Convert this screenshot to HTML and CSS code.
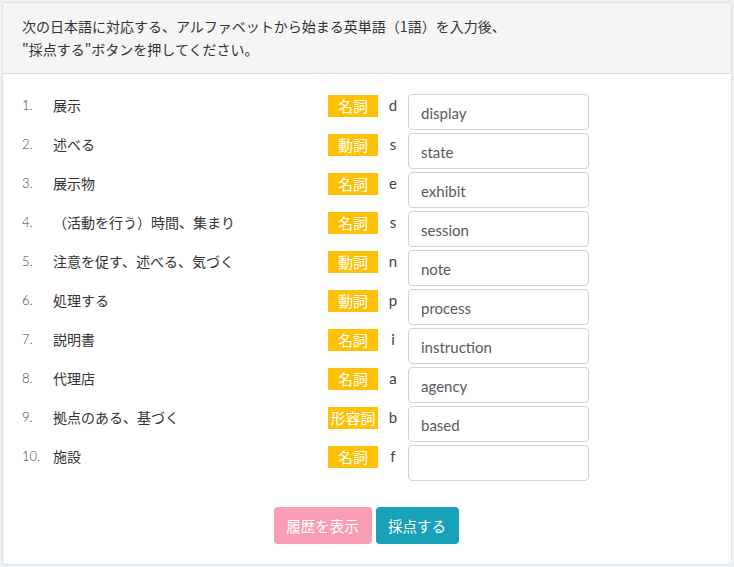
FILE: index.html
```html
<!DOCTYPE html>
<html lang="ja">
<head>
<meta charset="utf-8">
<link rel="stylesheet" href="styles.css">
</head>
<body>
<div class="card">
  <div class="card-header">次の日本語に対応する、アルファベットから始まる英単語（1語）を入力後、<br>"採点する"ボタンを押してください。</div>
  <div class="card-body">
    <ol class="quiz">
      <li class="row"><span class="num">1.</span><span class="jp">展示</span><span class="badge">名詞</span><span class="letter">d</span><input class="answer" value="display"></li>
      <li class="row"><span class="num">2.</span><span class="jp">述べる</span><span class="badge">動詞</span><span class="letter">s</span><input class="answer" value="state"></li>
      <li class="row"><span class="num">3.</span><span class="jp">展示物</span><span class="badge">名詞</span><span class="letter">e</span><input class="answer" value="exhibit"></li>
      <li class="row"><span class="num">4.</span><span class="jp">（活動を行う）時間、集まり</span><span class="badge">名詞</span><span class="letter">s</span><input class="answer" value="session"></li>
      <li class="row"><span class="num">5.</span><span class="jp">注意を促す、述べる、気づく</span><span class="badge">動詞</span><span class="letter">n</span><input class="answer" value="note"></li>
      <li class="row"><span class="num">6.</span><span class="jp">処理する</span><span class="badge">動詞</span><span class="letter">p</span><input class="answer" value="process"></li>
      <li class="row"><span class="num">7.</span><span class="jp">説明書</span><span class="badge">名詞</span><span class="letter">i</span><input class="answer" value="instruction"></li>
      <li class="row"><span class="num">8.</span><span class="jp">代理店</span><span class="badge">名詞</span><span class="letter">a</span><input class="answer" value="agency"></li>
      <li class="row"><span class="num">9.</span><span class="jp">拠点のある、基づく</span><span class="badge">形容詞</span><span class="letter">b</span><input class="answer" value="based"></li>
      <li class="row"><span class="num">10.</span><span class="jp">施設</span><span class="badge">名詞</span><span class="letter">f</span><input class="answer" value=""></li>
    </ol>
    <div class="actions">
      <button class="btn btn-pink">履歴を表示</button>
      <button class="btn btn-teal">採点する</button>
    </div>
  </div>
</div>
</body>
</html>
```
FILE: styles.css
```css
html, body {
  margin: 0;
  padding: 0;
}
body {
  background: #eef1f4;
  padding: 2px;
  font-family: Lato, "Noto Sans CJK JP", sans-serif;
  font-size: 14px;
  color: #333;
}
.card {
  width: 730px;
  box-sizing: border-box;
  background: #fff;
  border: 1px solid #dcdfe3;
  border-radius: 3px;
  height: 563px;
}
.card-header {
  background: #f5f5f5;
  border-bottom: 1px solid #dcdcdc;
  padding: 12px 19px 12px;
  line-height: 23px;
  font-family: "Noto Sans CJK JP", sans-serif;
  font-size: 14px;
  color: #333;
  height: 46px;
}
.card-body {
  padding: 20px 19px 20px;
}
.quiz {
  list-style: none;
  margin: 0;
  padding: 0;
  display: flex;
  flex-direction: column;
  gap: 3px;
}
.row {
  display: flex;
  align-items: flex-start;
  height: 36px;
}
.num {
  width: 31px;
  line-height: 22px;
  font-size: 13px;
  color: #444;
  font-family: Lato, sans-serif;
  font-weight: 300;
}
.jp {
  width: 275px;
  line-height: 22px;
  font-family: "Noto Sans CJK JP", sans-serif;
}
.badge {
  width: 50px;
  height: 22px;
  margin-top: 1px;
  background: #ffc107;
  color: #fff;
  text-align: center;
  line-height: 22px;
  font-family: "Noto Sans CJK JP", sans-serif;
  font-size: 15px;
}
.letter {
  width: 30px;
  text-align: center;
  line-height: 22px;
  font-size: 15px;
  color: #444;
}
.answer {
  width: 181px;
  height: 36px;
  box-sizing: border-box;
  border: 1px solid #ced4da;
  border-radius: 4px;
  padding: 2px 12px 0;
  font-family: Lato, sans-serif;
  font-size: 15px;
  color: #555a60;
  background: #fff;
  outline: none;
}
.actions {
  display: flex;
  justify-content: center;
  gap: 4px;
  margin-top: 26px;
  padding-right: 2px;
}
.btn {
  height: 37px;
  border: none;
  border-radius: 4px;
  padding: 0 12px;
  color: #fff;
  font-family: "Noto Sans CJK JP", sans-serif;
  font-size: 14.5px;
}
.btn-pink {
  background: #f99db5;
  width: 98px;
}
.btn-teal {
  background: #17a2b8;
  width: 83px;
}
```
